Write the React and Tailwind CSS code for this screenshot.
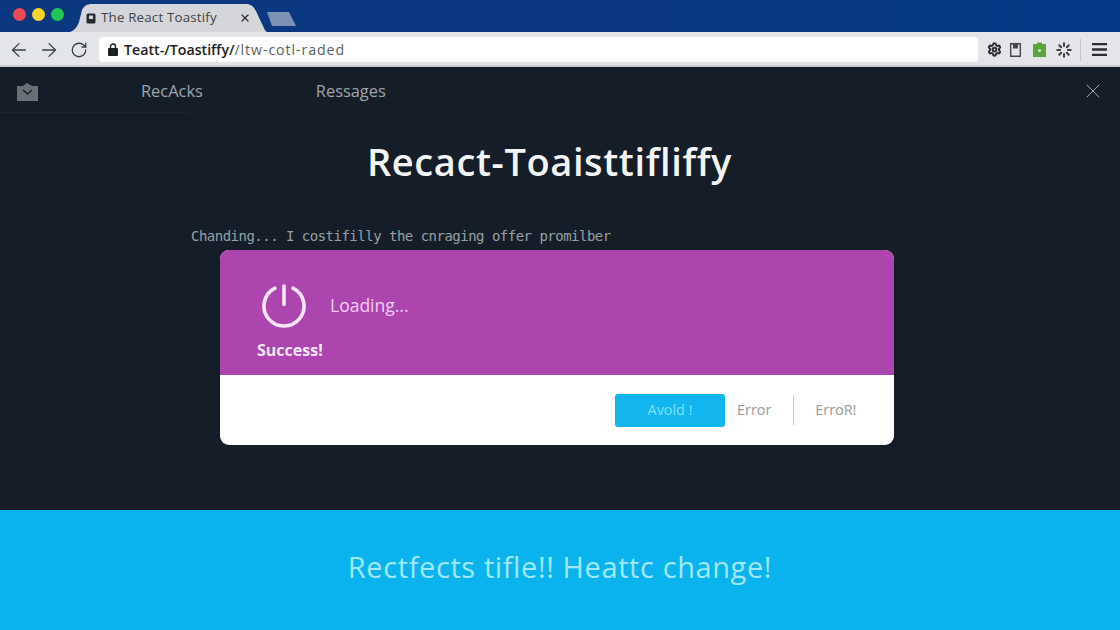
import { ArrowLeft, ArrowRight, RotateCw, X, Settings, Loader } from 'lucide-react'

const sans = "font-['Open_Sans','Noto_Sans',sans-serif]"

function BrowserTab() {
  return (
    <div className="relative ml-[70px] flex h-[32px] w-[197px] items-center pl-[16px] pt-[4px]">
      <svg className="absolute inset-0" width="197" height="32" viewBox="0 0 197 32">
        <path d="M0 32 C5 30 7 27 9 22 L12 10 C14 6 17 4 22 4 L176 4 C181 4 183 6 186 11 L192 24 C194 28 195 31 197 32 Z" fill="#d5d6d9" />
      </svg>
      <svg className="relative mr-[5px]" width="10" height="11" viewBox="0 0 10 11">
        <rect x="0.5" y="0.5" width="9" height="10" rx="1.5" fill="#27292e" />
        <path d="M3 2.5 H7 V6 H3 Z" fill="#d5d6d9" />
      </svg>
      <span className={`relative text-[13.3px] tracking-[0.2px] text-[#3f4347] ${sans}`}>The React Toastify</span>
      <X className="relative ml-[22px] text-[#2e3033]" size={12} strokeWidth={2.6} />
      <svg className="absolute left-[197px] top-[12px]" width="30" height="15" viewBox="0 0 30 15">
        <path d="M0 0 H22 L29 14 H5 Z" fill="#7d92b5" />
      </svg>
    </div>
  )
}

function TopBar() {
  return (
    <div className="relative flex h-[32px] items-start bg-gradient-to-r from-[#0c3880] via-[#0b3780] to-[#053a84]">
      <div className="absolute left-[13px] top-[8px] flex gap-[6px]">
        <div className="h-[13px] w-[13px] rounded-full bg-[#ea4a50]" />
        <div className="h-[13px] w-[13px] rounded-full bg-[#f6d42a]" />
        <div className="h-[13px] w-[13px] rounded-full bg-[#1fc94f]" />
      </div>
      <BrowserTab />
    </div>
  )
}

function Toolbar() {
  return (
    <div className="flex h-[35px] items-center border-b-2 border-[#c9cbd0] bg-[#e4e5e8] pl-[8px] pt-[2px]">
      <ArrowLeft className="text-[#3d4043]" size={22} strokeWidth={1.4} />
      <ArrowRight className="ml-[8px] text-[#3d4043]" size={22} strokeWidth={1.4} />
      <RotateCw className="ml-[10px] text-[#3d4043]" size={18} strokeWidth={1.7} />
      <div className={`ml-[11px] flex h-[25px] w-[879px] items-center rounded-[4px] bg-white pl-[9px] text-[14.2px] ${sans}`}>
        <svg width="10" height="13" viewBox="0 0 10 13">
          <path d="M2.5 6 V3.5 a2.5 2.5 0 0 1 5 0 V6" fill="none" stroke="#1d1e20" strokeWidth="1.4" />
          <rect x="0" y="5" width="10" height="8" rx="1" fill="#1d1e20" />
        </svg>
        <span className="ml-[6px] font-semibold text-[#1e2023]">Teatt-/Toastiffy/</span>
        <span className="tracking-[0.9px] text-[#5b5f63]">/ltw-cotl-raded</span>
      </div>
      <Settings className="ml-[9px] text-[#2c2e30]" size={15} strokeWidth={3.2} />
      <svg className="ml-[8px]" width="11" height="14" viewBox="0 0 11 14">
        <path d="M0.7 0.7 H10.3 V13.3 H0.7 Z" fill="none" stroke="#45474a" strokeWidth="1.4" />
        <path d="M3 1 H8 V5.5 H3 Z" fill="#45474a" />
      </svg>
      <svg className="ml-[12px]" width="13" height="15" viewBox="0 0 13 15">
        <path d="M4 2 V0.5 H9 V2 H13 V15 H0 V2 Z" fill="#5aa53c" />
        <circle cx="6.5" cy="8.5" r="1.6" fill="#cfe8c2" />
      </svg>
      <Loader className="ml-[10px] text-[#3b3d40]" size={16} strokeWidth={3} />
      <div className="ml-[8px] h-[22px] w-px bg-[#c4c6ca]" />
      <svg className="ml-[11px]" width="15" height="13" viewBox="0 0 15 13">
        <path d="M0 1.2 H15 M0 6.5 H15 M0 11.8 H15" stroke="#2c2e30" strokeWidth="2.3" />
      </svg>
    </div>
  )
}

function PageNav() {
  return (
    <div className={`relative flex h-[48px] items-center pl-[17px] pr-[15px] text-[16.4px] text-[#a0a5ab] ${sans}`}>
      <svg width="21" height="21" viewBox="0 0 21 21">
        <path d="M0 5 H6 L10 2 L15 5 H21 V20 H0 Z" fill="#6b7076" />
        <path d="M6 9 L10.5 13 L15 9" fill="none" stroke="#1b222c" strokeWidth="1.5" />
      </svg>
      <span className="ml-[103px]">RecAcks</span>
      <span className="ml-[113px]">Ressages</span>
      <X className="ml-auto text-[#a5abb0]" size={24} strokeWidth={1} />
      <div className="absolute bottom-[2px] left-0 h-px w-[190px] bg-[#1b2430]" />
    </div>
  )
}

function Modal() {
  return (
    <div className="ml-[220px] mt-[4px] w-[674px] overflow-hidden rounded-[9px] bg-white">
      <div className="h-[125px] bg-[#ad45ae] pl-[37px] pt-[34px]">
        <div className="flex items-center">
          <svg className="ml-[5px]" width="44" height="44" viewBox="0 0 44 44" fill="none" stroke="#f8e6f8" strokeWidth="3.6" strokeLinecap="round">
            <path d="M13 4.14 A20 20 0 1 0 31 4.14" />
            <path d="M22 2 V20.5" />
          </svg>
          <span className={`ml-[24px] pb-[2px] text-[17.5px] text-[#f3cdf3] ${sans}`}>Loading...</span>
        </div>
        <div className={`mt-[11px] text-[16px] leading-[22px] font-bold text-[#f6e9f6] ${sans}`}>Success!</div>
      </div>
      <div className={`flex h-[70px] items-center pl-[395px] text-[14.4px] text-[#97999c] ${sans}`}>
        <button className="h-[33px] w-[110px] rounded-[3px] bg-[#12b5ee] text-[#7fe1fb]">Avold !</button>
        <span className="ml-[12px]">Error</span>
        <div className="ml-[22px] h-[30px] w-px bg-[#c9cacc]" />
        <span className="ml-[21px]">ErroR!</span>
      </div>
    </div>
  )
}

export default function App() {
  return (
    <div className="flex h-[630px] w-[1120px] flex-col overflow-hidden bg-[#151e28]">
      <TopBar />
      <Toolbar />
      <div className="flex-1">
        <PageNav />
        <h1 className={`mt-[21px] pr-[21px] text-center text-[38px] leading-[50px] font-semibold tracking-[0.6px] text-[#f2f4f6] ${sans}`}>Recact-Toaisttifliffy</h1>
        <p className="mt-[40px] pl-[191px] font-['DejaVu_Sans_Mono',monospace] text-[14px] leading-[20px] tracking-[-0.51px] text-[#98a0a6]">
          Chanding... I costifilly the cnraging offer promilber
        </p>
        <Modal />
      </div>
      <div className={`flex h-[120px] items-center justify-center bg-[#0bb3ee] pb-[6px] text-[29px] tracking-[0.6px] text-[#9ee9f5] ${sans}`}>
        Rectfects tifle!! Heattc change!
      </div>
    </div>
  )
}
